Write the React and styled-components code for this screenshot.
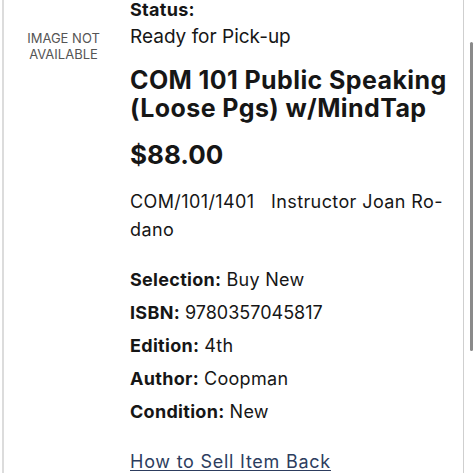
// Dependencies
import React from 'react';
import styled, { createGlobalStyle } from 'styled-components';

// Styles
const GlobalStyle = createGlobalStyle`
  html, body {
    margin: 0;
    padding: 0;
    background: #fff;
    overflow: hidden;
  }
  body {
    font-family: 'Inter', 'Liberation Sans', sans-serif;
    color: #161616;
  }
`;

const Page = styled.div`
  position: relative;
  width: 474px;
  height: 473px;
  overflow: hidden;
  background: #fff;
`;

const Card = styled.div`
  width: 462px;
  height: 473px;
  margin-left: 2px;
  border-left: 2px solid #dcdcdc;
  border-right: 1px solid #cfcfcf;
  display: grid;
  grid-template-columns: 122px 1fr;
  box-sizing: border-box;
`;

const ImageBox = styled.div`
  padding: 30px 3px 0 0;
  text-align: center;
  font-size: 13px;
  line-height: 16px;
  color: #555;
  text-transform: uppercase;
`;

const Details = styled.div`
  padding: 0 6px 0 4px;
  display: flex;
  flex-direction: column;
  letter-spacing: 0.3px;
`;

const Label = styled.div`
  font-size: 18px;
  font-weight: 700;
  line-height: 18px;
  padding-top: 1px;
`;

const StatusText = styled.div`
  font-size: 19px;
  line-height: 30px;
  margin-top: 3px;
  letter-spacing: 0;
`;

const Title = styled.h1`
  margin: 14px 0 0;
  font-size: 25px;
  font-weight: 700;
  line-height: 28px;
  letter-spacing: 0.4px;
`;

const Price = styled.div`
  margin-top: 18px;
  font-size: 26px;
  font-weight: 700;
  line-height: 30px;
  letter-spacing: 0;
`;

const Section = styled.div`
  margin-top: 18px;
  font-size: 18px;
  line-height: 28px;
  letter-spacing: 0.4px;
`;

const Specs = styled.dl`
  margin: 24px 0 0;
  display: flex;
  flex-direction: column;
  gap: 9px;
  font-size: 18px;
  line-height: 24px;
`;

const Spec = styled.div`
  display: flex;
  gap: 5px;
  dt {
    font-weight: 700;
  }
  dd {
    margin: 0;
    letter-spacing: ${(props) => props.valueSpacing || '0.3px'};
  }
`;

const SellLink = styled.a`
  margin-top: 27px;
  font-size: 18px;
  line-height: 22px;
  letter-spacing: 0.75px;
  color: #2d3d5e;
  text-decoration: underline;
  text-decoration-thickness: 1px;
  text-underline-offset: 2px;
  align-self: flex-start;
`;

const ScrollThumb = styled.div`
  position: absolute;
  right: 1px;
  top: 42px;
  width: 3px;
  height: 309px;
  border-radius: 2px;
  background: #8a8a8a;
`;

const specs = [
  ['Selection:', 'Buy New'],
  ['ISBN:', '9780357045817', '0px'],
  ['Edition:', '4th'],
  ['Author:', 'Coopman'],
  ['Condition:', 'New'],
];

const App = () => {
  return (
    <Page>
      <GlobalStyle />
      <Card>
        <ImageBox>
          Image not
          <br />
          available
        </ImageBox>
        <Details>
          <Label>Status:</Label>
          <StatusText>Ready for Pick-up</StatusText>
          <Title>COM 101 Public Speaking (Loose Pgs) w/MindTap</Title>
          <Price>$88.00</Price>
          <Section>
            COM/101/1401&nbsp;&nbsp; Instructor Joan Ro-
            <br />
            dano
          </Section>
          <Specs>
            {specs.map(([label, value, spacing]) => (
              <Spec key={label} valueSpacing={spacing}>
                <dt>{label}</dt>
                <dd>{value}</dd>
              </Spec>
            ))}
          </Specs>
          <SellLink href='#'>How to Sell Item Back</SellLink>
        </Details>
      </Card>
      <ScrollThumb />
    </Page>
  );
};

export default App;
